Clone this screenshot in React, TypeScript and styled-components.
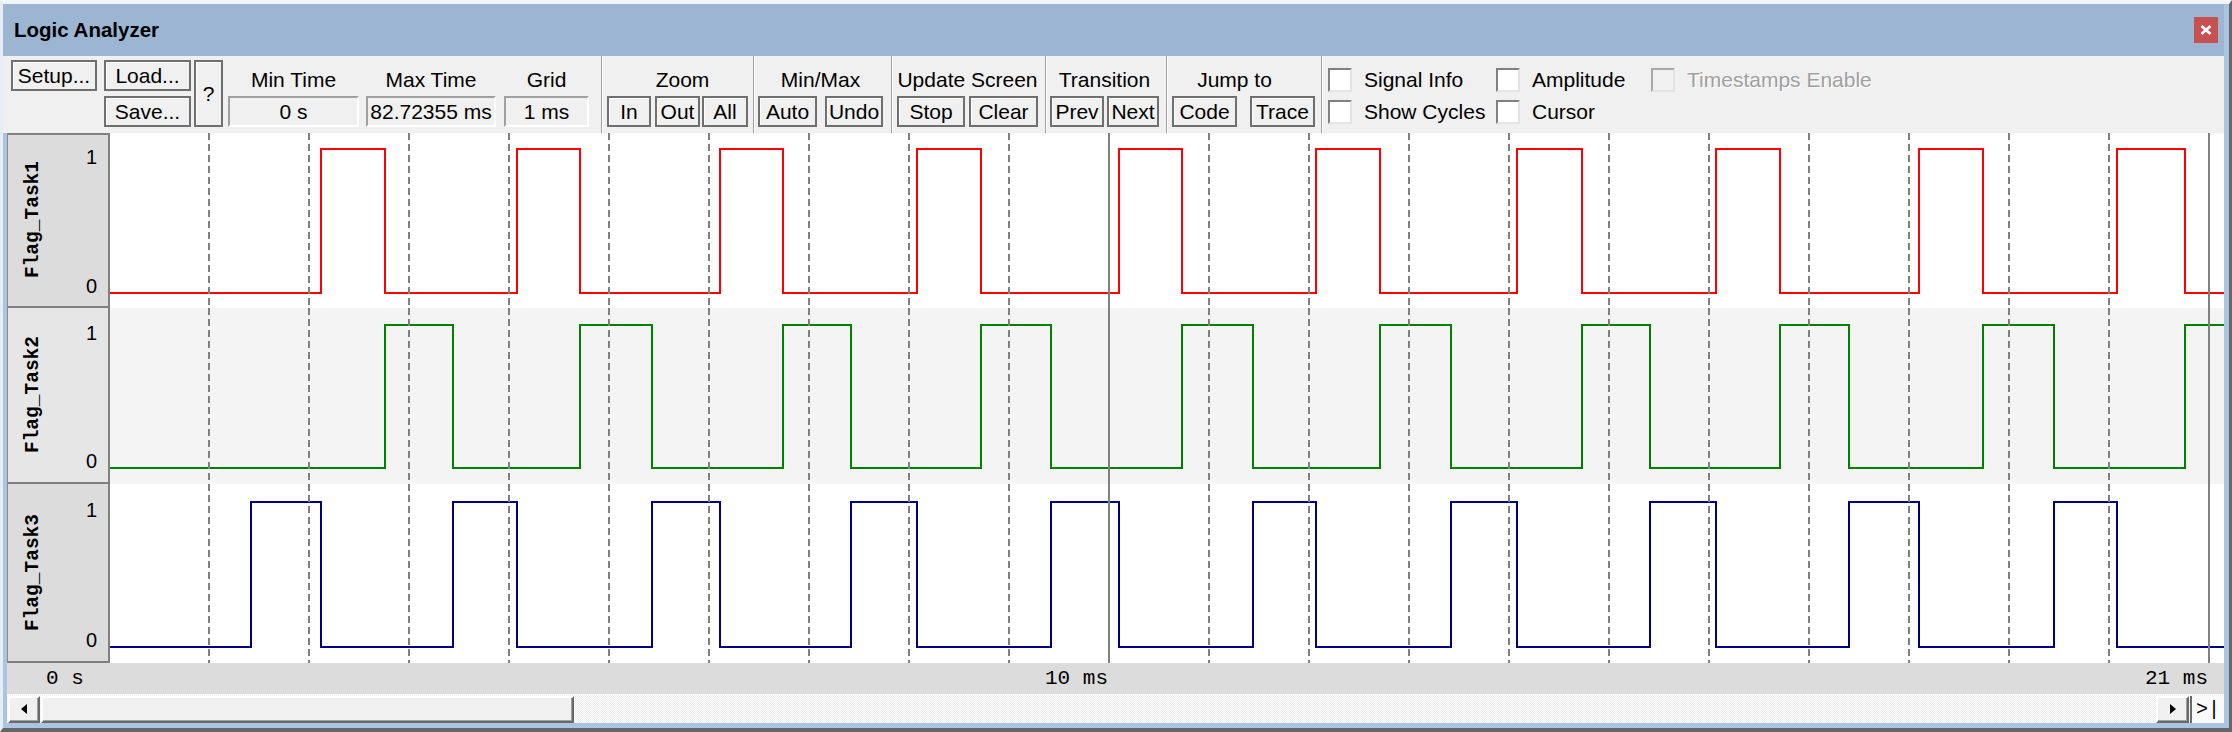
import React from 'react';
import styled, { createGlobalStyle } from 'styled-components';

const GlobalStyle = createGlobalStyle`
  html, body {
    margin: 0;
    padding: 0;
    background: #f0f0f0;
  }
  body {
    font-family: 'Liberation Sans', Arial, sans-serif;
  }
  * {
    box-sizing: border-box;
  }
`;

const PLOT_LEFT = 110;
const PLOT_RIGHT = 2224;
const PLOT_WIDTH = PLOT_RIGHT - PLOT_LEFT;

// edge positions (px on screen, 100px = 1 ms, t0 at x=109)
const B = [251, 453, 652, 851, 1051, 1253, 1451, 1650, 1849, 2054];
const R = [321, 517, 720, 917, 1119, 1316, 1517, 1716, 1919, 2117];
const G = [385, 580, 783, 981, 1182, 1380, 1582, 1780, 1983, 2185];

type Pulse = [number, number | null];

const signals: {
  name: string;
  color: string;
  h: number;
  hi: number;
  lo: number;
  shade: boolean;
  pulses: Pulse[];
}[] = [
  {
    name: 'Flag_Task1',
    color: '#ff0000',
    h: 175,
    hi: 16,
    lo: 160,
    shade: false,
    pulses: R.map((r, i) => [r, G[i]] as Pulse),
  },
  {
    name: 'Flag_Task2',
    color: '#008000',
    h: 176,
    hi: 17,
    lo: 160,
    shade: true,
    pulses: G.map((g, i) => [g, i + 1 < B.length ? B[i + 1] : null] as Pulse),
  },
  {
    name: 'Flag_Task3',
    color: '#000080',
    h: 179,
    hi: 18,
    lo: 163,
    shade: false,
    pulses: B.map((b, i) => [b, R[i]] as Pulse),
  },
];

const timeLabels = [
  { text: '0 s', x: 46 },
  { text: '10 ms', x: 1045 },
  { text: '21 ms', x: 2145 },
];

const Window = styled.div`
  width: 2232px;
  height: 732px;
  display: flex;
  flex-direction: column;
  background: #a9c5e1;
  border-top: 4px solid #f1f5f9;
  border-left: 3px solid #e6edf5;
  border-right: 3px solid #666666;
  border-bottom: 4px solid #666666;
  overflow: hidden;
`;

const TitleBar = styled.div`
  height: 52px;
  flex: none;
  margin-right: 5px;
  background: #9bb5d3;
  display: flex;
  align-items: center;
  justify-content: space-between;
  padding: 0 6px 0 11px;
`;

const Title = styled.span`
  font: bold 20.5px 'Liberation Sans', Arial, sans-serif;
  color: #000;
`;

const CloseButton = styled.div`
  width: 24px;
  height: 26px;
  background: #c75050;
  display: flex;
  align-items: center;
  justify-content: center;
`;

const Toolbar = styled.div`
  height: 77px;
  flex: none;
  margin-right: 5px;
  background: #f0f0f0;
  display: flex;
  align-items: stretch;
  padding-left: 8px;
  font-size: 21px;
  color: #000;
`;

const FileGroup = styled.div`
  display: grid;
  grid-template-columns: 93px 90px 29px;
  grid-template-rows: 31px 31px;
  row-gap: 5px;
  padding-top: 4px;
`;

const Btn = styled.button<{ $w: number; $tall?: boolean; $cell?: string }>`
  width: ${p => p.$w}px;
  height: ${p => (p.$tall ? 67 : 31)}px;
  ${p => (p.$cell ? `grid-area: ${p.$cell};` : '')}
  margin: 0;
  padding: 0;
  background: #f0f0f0;
  border: 2px solid #6f6f6f;
  box-shadow: inset 1px 1px 0 #ffffff;
  font-family: 'Liberation Sans', Arial, sans-serif;
  font-size: 21px;
  line-height: 1;
  color: #000;
  display: flex;
  align-items: center;
  justify-content: center;
  white-space: nowrap;
`;

const ValueGroup = styled.div`
  display: flex;
  padding-right: 12px;
`;

const Field = styled.div<{ $ml: number }>`
  display: flex;
  flex-direction: column;
  margin-left: ${p => p.$ml}px;
`;

const GroupLabel = styled.div<{ $shift?: number }>`
  height: 40px;
  width: 0;
  min-width: 100%;
  display: flex;
  align-items: flex-end;
  justify-content: center;
  padding-bottom: 5px;
  padding-left: ${p => Math.max(0, (p.$shift ?? 0) * 2)}px;
  padding-right: ${p => Math.max(0, -(p.$shift ?? 0) * 2)}px;
  line-height: 22px;
  white-space: nowrap;
`;

const ValueBox = styled.div<{ $w: number }>`
  width: ${p => p.$w}px;
  height: 31px;
  border-top: 2px solid #a0a0a0;
  border-left: 2px solid #a0a0a0;
  border-right: 2px solid #ffffff;
  border-bottom: 2px solid #ffffff;
  display: flex;
  align-items: center;
  justify-content: center;
  white-space: nowrap;
`;

const Separator = styled.div`
  width: 2px;
  flex: none;
  border-left: 1px solid #a0a0a0;
  border-right: 1px solid #ffffff;
`;

const Group = styled.div<{ $pl: number; $pr: number }>`
  display: flex;
  flex-direction: column;
  padding: 0 ${p => p.$pr}px 0 ${p => p.$pl}px;
`;

const ButtonRow = styled.div<{ $gaps: number[] }>`
  display: flex;
  & > *:nth-child(2) {
    margin-left: ${p => p.$gaps[0] ?? 0}px;
  }
  & > *:nth-child(3) {
    margin-left: ${p => p.$gaps[1] ?? 0}px;
  }
`;

const CheckGrid = styled.div`
  display: grid;
  grid-template-columns: 168px 155px auto;
  grid-template-rows: 32px 32px;
  padding: 12px 0 0 5px;
`;

const CheckItem = styled.label<{ $disabled?: boolean }>`
  display: flex;
  align-items: center;
  height: 24px;
  gap: 12px;
  white-space: nowrap;
  color: ${p => (p.$disabled ? '#a0a0a0' : '#000')};
  text-shadow: ${p => (p.$disabled ? '1px 1px 0 #ffffff' : 'none')};
`;

const CheckBox = styled.span<{ $disabled?: boolean }>`
  width: 24px;
  height: 24px;
  flex: none;
  background: ${p => (p.$disabled ? '#f0f0f0' : '#ffffff')};
  border-top: 2px solid ${p => (p.$disabled ? '#a8a8a8' : '#808080')};
  border-left: 2px solid ${p => (p.$disabled ? '#a8a8a8' : '#808080')};
  border-right: 2px solid #e3e3e3;
  border-bottom: 2px solid #e3e3e3;
`;

const SignalArea = styled.div`
  margin: 0 5px 0 4px;
  display: flex;
  flex-direction: column;
  flex: none;
`;

const SignalRow = styled.div<{ $h: number }>`
  display: flex;
  height: ${p => p.$h}px;
`;

const LabelCell = styled.div<{ $shade: boolean; $first: boolean }>`
  width: 103px;
  flex: none;
  display: flex;
  background: ${p => (p.$shade ? '#e6e6e6' : '#dcdcdc')};
  border-left: 1px solid #8c8c8c;
  border-right: 2px solid #808080;
  border-bottom: 2px solid #808080;
  box-shadow: ${p => (p.$first ? 'inset 0 2px 0 #808080' : 'none')};
`;

const NameCol = styled.div`
  width: 50px;
  flex: none;
  display: flex;
  align-items: center;
  justify-content: center;
`;

const SignalName = styled.span`
  writing-mode: vertical-rl;
  transform: rotate(180deg);
  font: bold 19.5px 'Liberation Mono', 'DejaVu Sans Mono', monospace;
  line-height: 20px;
  color: #000;
  white-space: nowrap;
`;

const LevelCol = styled.div<{ $pt: number; $pb: number }>`
  flex: 1;
  display: flex;
  flex-direction: column;
  align-items: flex-end;
  justify-content: space-between;
  padding: ${p => p.$pt}px 11px ${p => p.$pb}px 0;
  font: 20px 'Liberation Sans', Arial, sans-serif;
  line-height: 20px;
  color: #000;
`;

const PlotCell = styled.div<{ $shade: boolean }>`
  flex: 1;
  background: ${p => (p.$shade ? '#f4f4f4' : '#ffffff')};
  overflow: hidden;
`;

const TimeAxis = styled.div`
  height: 31px;
  flex: none;
  margin: 0 5px 0 4px;
  background: #dcdcdc;
  position: relative;
  font: 21px 'Liberation Mono', 'DejaVu Sans Mono', monospace;
  line-height: 31px;
  color: #000;
`;

const TimeLabel = styled.span`
  position: absolute;
  top: 0;
  white-space: pre;
`;

const ScrollBar = styled.div`
  height: 29px;
  flex: none;
  margin: 0 5px 0 4px;
  border-top: 1px solid #ffffff;
  display: flex;
  align-items: center;
  background-color: #ffffff;
  background-image: repeating-conic-gradient(#ececec 0 25%, #ffffff 0 50%);
  background-size: 2px 2px;
`;

const ScrollPart = styled.div<{ $w: number; $ml?: number }>`
  width: ${p => p.$w}px;
  height: 27px;
  flex: none;
  margin-left: ${p => p.$ml ?? 0}px;
  background: #f0f0f0;
  border-top: 2px solid #ffffff;
  border-left: 2px solid #ffffff;
  border-right: 2px solid #696969;
  border-bottom: 2px solid #696969;
  box-shadow: inset -1px -1px 0 #a0a0a0;
  display: flex;
  align-items: center;
  justify-content: center;
`;

const EndButton = styled.div`
  width: 34px;
  height: 27px;
  flex: none;
  margin-left: 1px;
  background: #fafafa;
  border-left: 2px solid #696969;
  display: flex;
  align-items: center;
  justify-content: center;
  font: 20px 'Liberation Mono', 'DejaVu Sans Mono', monospace;
  color: #000;
`;

const Filler = styled.div`
  flex: 1;
`;

const wavePath = (pulses: Pulse[], hi: number, lo: number) => {
  let d = `M ${PLOT_LEFT} ${lo}`;
  for (const [rise, fall] of pulses) {
    d += ` H ${rise} V ${hi}`;
    if (fall === null) {
      d += ` H ${PLOT_RIGHT}`;
      return d;
    }
    d += ` H ${fall} V ${lo}`;
  }
  return d + ` H ${PLOT_RIGHT}`;
};

const gridKs = Array.from({ length: 21 }, (_, i) => i + 1);

const Plot = ({ h, hi, lo, color, pulses }: { h: number; hi: number; lo: number; color: string; pulses: Pulse[] }) => (
  <svg width={PLOT_WIDTH} height={h} viewBox={`${PLOT_LEFT} 0 ${PLOT_WIDTH} ${h}`} style={{ display: 'block' }}>
    <path d={wavePath(pulses, hi, lo)} fill="none" stroke={color} strokeWidth={2} shapeRendering="crispEdges" />
    {gridKs.map(k => {
      const x = 109 + 100 * k;
      const solid = k === 10 || k === 21;
      return (
        <line
          key={k}
          x1={x}
          x2={x}
          y1={0}
          y2={h}
          stroke="#808080"
          strokeWidth={2}
          strokeDasharray={solid ? undefined : '7 4'}
          shapeRendering="crispEdges"
        />
      );
    })}
  </svg>
);

const Check = ({ label, disabled }: { label: string; disabled?: boolean }) => (
  <CheckItem $disabled={disabled}>
    <CheckBox $disabled={disabled} />
    {label}
  </CheckItem>
);

export default function App() {
  return (
    <>
      <GlobalStyle />
      <Window>
        <TitleBar>
          <Title>Logic Analyzer</Title>
          <CloseButton>
            <svg width="12" height="10" viewBox="0 0 12 10">
              <path d="M1.5 1 L10.5 9 M10.5 1 L1.5 9" stroke="#ffffff" strokeWidth="2.6" />
            </svg>
          </CloseButton>
        </TitleBar>

        <Toolbar>
          <FileGroup>
            <Btn $w={86} $cell="1 / 1 / 2 / 2">Setup...</Btn>
            <Btn $w={87} $cell="1 / 2 / 2 / 3">Load...</Btn>
            <Btn $w={87} $cell="2 / 2 / 3 / 3">Save...</Btn>
            <Btn $w={29} $tall $cell="1 / 3 / 3 / 4">?</Btn>
          </FileGroup>

          <ValueGroup>
            <Field $ml={5}>
              <GroupLabel>Min Time</GroupLabel>
              <ValueBox $w={131}>0 s</ValueBox>
            </Field>
            <Field $ml={7}>
              <GroupLabel>Max Time</GroupLabel>
              <ValueBox $w={130}>82.72355 ms</ValueBox>
            </Field>
            <Field $ml={8}>
              <GroupLabel>Grid</GroupLabel>
              <ValueBox $w={85}>1 ms</ValueBox>
            </Field>
          </ValueGroup>
          <Separator />

          <Group $pl={4} $pr={5}>
            <GroupLabel $shift={5}>Zoom</GroupLabel>
            <ButtonRow $gaps={[4, 2]}>
              <Btn $w={44}>In</Btn>
              <Btn $w={45}>Out</Btn>
              <Btn $w={46}>All</Btn>
            </ButtonRow>
          </Group>
          <Separator />

          <Group $pl={3} $pr={8}>
            <GroupLabel>Min/Max</GroupLabel>
            <ButtonRow $gaps={[8]}>
              <Btn $w={59}>Auto</Btn>
              <Btn $w={58}>Undo</Btn>
            </ButtonRow>
          </Group>
          <Separator />

          <Group $pl={4} $pr={7}>
            <GroupLabel>Update Screen</GroupLabel>
            <ButtonRow $gaps={[4]}>
              <Btn $w={68}>Stop</Btn>
              <Btn $w={69}>Clear</Btn>
            </ButtonRow>
          </Group>
          <Separator />

          <Group $pl={3} $pr={7}>
            <GroupLabel>Transition</GroupLabel>
            <ButtonRow $gaps={[3]}>
              <Btn $w={54}>Prev</Btn>
              <Btn $w={52}>Next</Btn>
            </ButtonRow>
          </Group>
          <Separator />

          <Group $pl={4} $pr={6}>
            <GroupLabel $shift={-9}>Jump to</GroupLabel>
            <ButtonRow $gaps={[13]}>
              <Btn $w={65}>Code</Btn>
              <Btn $w={65}>Trace</Btn>
            </ButtonRow>
          </Group>
          <Separator />

          <CheckGrid>
            <Check label="Signal Info" />
            <Check label="Amplitude" />
            <Check label="Timestamps Enable" disabled />
            <Check label="Show Cycles" />
            <Check label="Cursor" />
          </CheckGrid>
        </Toolbar>

        <SignalArea>
          {signals.map((s, i) => (
            <SignalRow key={s.name} $h={s.h}>
              <LabelCell $shade={s.shade} $first={i === 0}>
                <NameCol>
                  <SignalName>{s.name}</SignalName>
                </NameCol>
                <LevelCol $pt={s.hi - 2} $pb={s.h - s.lo - 5}>
                  <span>1</span>
                  <span>0</span>
                </LevelCol>
              </LabelCell>
              <PlotCell $shade={s.shade}>
                <Plot h={s.h} hi={s.hi} lo={s.lo} color={s.color} pulses={s.pulses} />
              </PlotCell>
            </SignalRow>
          ))}
        </SignalArea>

        <TimeAxis>
          {timeLabels.map(l => (
            <TimeLabel key={l.text} style={{ left: l.x - 7 }}>
              {l.text}
            </TimeLabel>
          ))}
        </TimeAxis>

        <ScrollBar>
          <ScrollPart $w={32} $ml={1}>
            <svg width="6" height="10" viewBox="0 0 6 10">
              <polygon points="6,0 0,5 6,10" fill="#000" />
            </svg>
          </ScrollPart>
          <ScrollPart $w={533} $ml={1} />
          <Filler />
          <ScrollPart $w={33}>
            <svg width="6" height="10" viewBox="0 0 6 10">
              <polygon points="0,0 6,5 0,10" fill="#000" />
            </svg>
          </ScrollPart>
          <EndButton>&gt;|</EndButton>
        </ScrollBar>
      </Window>
    </>
  );
}
